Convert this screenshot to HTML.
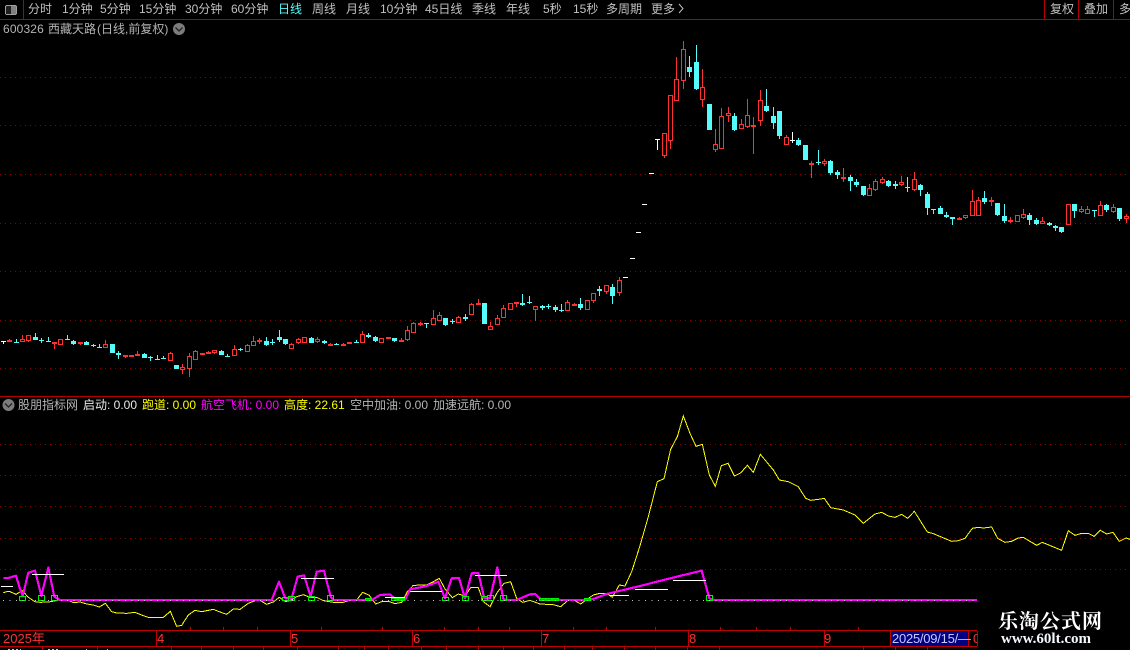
<!DOCTYPE html>
<html><head><meta charset="utf-8"><title>600326</title>
<style>
html,body{margin:0;padding:0;background:#000;width:1130px;height:650px;overflow:hidden}
#w{position:relative;width:1130px;height:650px;overflow:hidden;background:#000}
svg{position:absolute;left:0;top:0}
.t{position:absolute;font:12px/14px "Liberation Sans","WenQuanYi Zen Hei","Noto Sans CJK SC",sans-serif;white-space:nowrap;color:#c0c0c0}
.b{top:2px}
.h{top:22px;color:#b4b4b4}
.i{top:398px}
.a{top:631px;color:#ff3232;font-size:13px;line-height:15px}
</style></head><body><div id="w">
<svg width="1130" height="650" viewBox="0 0 1130 650" fill="none" shape-rendering="crispEdges">
<!-- grid -->
<path d="M0 77.500H1130M0 125.500H1130M0 174.500H1130M0 223.500H1130M0 271.500H1130M0 320.500H1130M0 368.500H1130M0 444.500H1130M0 475.500H1130M0 506.500H1130M0 538.500H1130M0 569.500H1130" stroke="#8c0000" stroke-dasharray="1 4"/>
<!-- frame -->
<path d="M0 19.500H1130M23.500 0V19M1044.500 0V19M1078.500 0V19M1113.500 0V19M0 396.500H1130" stroke="#b00000"/>
<path d="M0 630.500H977M0 646.500H977M156.500 631V646M290.500 631V646M412.500 631V646M541.500 631V646M688.500 631V646M824.500 631V646M890.500 631V646M968.500 631V646M977.500 631V646" stroke="#c00000"/>
<path d="M190.500 627V630M223.500 627V630M257.500 627V630M321.500 627V630M382.500 627V630M444.500 627V630M478.500 627V630M509.500 627V630M573.500 627V630M606.500 627V630M655.500 627V630M720.500 627V630M756.500 627V630M790.500 627V630M858.500 627V630" stroke="#c00000"/>
<path d="M42.500 647V650M97.500 647V650M171.500 647V650M201.500 647V650M233.500 647V650M263.500 647V650M297.500 647V650M338.500 647V650M364.500 647V650M388.500 647V650M421.500 647V650M446.500 647V650M478.500 647V650M503.500 647V650M533.500 647V650M564.500 647V650M592.500 647V650M624.500 647V650M655.500 647V650M687.500 647V650M719.500 647V650M863.500 647V650M895.500 647V650M927.500 647V650" stroke="#c00000"/>
<path d="M8 649.500h13M107 649.500h1" stroke="#c0c0c0" stroke-dasharray="2 2"/>
<path d="M48 649.500h10M86 649.500h1" stroke="#e0e000" stroke-dasharray="2 2"/>
<rect x="891" y="631" width="77" height="15" fill="#000080"/>
<!-- toolbar icon -->
<rect x="5.500" y="5.500" width="11" height="9" rx="1.500" stroke="#a0a0a0" fill="#202020"/>
<rect x="11" y="6" width="5" height="8" fill="#808080"/>
<!-- chevrons -->
<g shape-rendering="auto">
<circle cx="179" cy="29" r="6" fill="#7c7c7c"/><path d="M175.500 27.500l3.500 3.500 3.500-3.500" stroke="#222" stroke-width="1.300"/>
<circle cx="8.500" cy="405" r="6" fill="#7c7c7c"/><path d="M5 403.500l3.500 3.500 3.500-3.500" stroke="#222" stroke-width="1.300"/>
</g>
<path d="M679 4l4 4.500-4 4.500" stroke="#c0c0c0" shape-rendering="auto"/>
<!-- red wicks -->
<path stroke="#ff3232" d="M9.500 339V342M22.500 335V342M28.500 335V342M54.500 342V349M60.500 339V345M80.500 342V345M105.500 340V348M125.500 355V358M131.500 355V356M137.500 351V355M170.500 352V361M182.500 364V374M189.500 353V377M195.500 350V360M202.500 353V355M208.500 351V354M214.500 350V354M234.500 345V356M247.500 344V352M253.500 336V346M259.500 338V344M291.500 343V349M298.500 338V344M304.500 337V343M317.500 337V343M330.500 343V346M343.500 343V346M349.500 342V344M362.500 331V343M381.500 338V343M388.500 337V339M401.500 338V342M407.500 326V341M413.500 322V333M420.500 322V326M433.500 310V325M439.500 312V321M458.500 316V323M471.500 303V315M478.500 299V305M490.500 322V330M497.500 315V325M503.500 305V318M510.500 303V310M516.500 302V307M535.500 306V321M567.500 300V311M574.500 303V305M587.500 300V310M593.500 293V303M606.500 285V294M619.500 277V296M664.500 133V158M670.500 95V149M676.500 57V101M683.500 41V89M702.500 69V107M715.500 129V152M721.500 108V149M728.500 107V122M741.500 119V129M747.500 99V128M753.500 117V154M760.500 90V126M786.500 135V145M811.500 161V178M824.500 159V166M843.500 168V182M869.500 184V196M875.500 179V191M882.500 177V184M901.500 176V186M914.500 172V191M959.500 217V220M965.500 215V219M972.500 190V216M978.500 197V216M991.500 197V206M1010.500 217V223M1017.500 215V222M1023.500 209V219M1042.500 217V224M1068.500 204V225M1081.500 206V213M1087.500 206V214M1100.500 201V216M1113.500 204V213M1126.500 214V223"/>
<!-- red bodies -->
<path stroke="#ff3232" fill="#000" d="M7.500 340.500h4v1h-4zM20.500 339.500h4v2h-4zM26.500 335.500h4v5h-4zM52.500 342.500h4v1h-4zM58.500 339.500h4v5h-4zM78.500 342.500h4v1h-4zM103.500 344.500h4v3h-4zM123.500 355.500h4v1h-4zM129.500 355.500h4v1h-4zM135.500 354.500h4v1h-4zM168.500 353.500h4v7h-4zM180.500 367.500h4v2h-4zM187.500 356.500h4v12h-4zM193.500 351.500h4v8h-4zM200.500 353.500h4v1h-4zM206.500 352.500h4v1h-4zM212.500 350.500h4v2h-4zM232.500 349.500h4v6h-4zM245.500 345.500h4v6h-4zM251.500 341.500h4v4h-4zM257.500 340.500h4v1h-4zM289.500 344.500h4v4h-4zM296.500 339.500h4v3h-4zM302.500 337.500h4v5h-4zM315.500 339.500h4v2h-4zM328.500 344.500h4v1h-4zM341.500 344.500h4v1h-4zM347.500 342.500h4v1h-4zM360.500 334.500h4v8h-4zM379.500 338.500h4v4h-4zM386.500 337.500h4v1h-4zM399.500 340.500h4v1h-4zM405.500 330.500h4v9h-4zM411.500 323.500h4v9h-4zM418.500 323.500h4v1h-4zM431.500 318.500h4v6h-4zM437.500 315.500h4v5h-4zM456.500 317.500h4v5h-4zM469.500 304.500h4v10h-4zM476.500 303.500h4v1h-4zM488.500 326.500h4v3h-4zM495.500 318.500h4v6h-4zM501.500 308.500h4v9h-4zM508.500 303.500h4v6h-4zM514.500 302.500h4v1h-4zM533.500 306.500h4v3h-4zM565.500 302.500h4v8h-4zM572.500 304.500h4v1h-4zM585.500 300.500h4v9h-4zM591.500 293.500h4v7h-4zM604.500 285.500h4v6h-4zM617.500 280.500h4v12h-4zM662.500 133.500h4v22h-4zM668.500 95.500h4v45h-4zM674.500 79.500h4v21h-4zM681.500 49.500h4v31h-4zM700.500 87.500h4v12h-4zM713.500 144.500h4v5h-4zM719.500 116.500h4v32h-4zM726.500 113.500h4v2h-4zM739.500 124.500h4v4h-4zM745.500 115.500h4v11h-4zM751.500 125.500h4v1h-4zM758.500 100.500h4v20h-4zM784.500 137.500h4v7h-4zM809.500 163.500h4v1h-4zM822.500 161.500h4v2h-4zM841.500 177.500h4v1h-4zM867.500 188.500h4v7h-4zM873.500 181.500h4v8h-4zM880.500 179.500h4v3h-4zM899.500 182.500h4v2h-4zM912.500 179.500h4v10h-4zM957.500 218.500h4v1h-4zM963.500 215.500h4v2h-4zM970.500 201.500h4v14h-4zM976.500 200.500h4v15h-4zM989.500 200.500h4v1h-4zM1008.500 220.500h4v1h-4zM1015.500 215.500h4v6h-4zM1021.500 214.500h4v3h-4zM1040.500 221.500h4v2h-4zM1066.500 204.500h4v20h-4zM1079.500 209.500h4v2h-4zM1085.500 209.500h4v4h-4zM1098.500 205.500h4v10h-4zM1111.500 207.500h4v4h-4zM1124.500 216.500h4v2h-4z"/>
<!-- cyan wicks -->
<path stroke="#54fcfc" d="M16.500 339V343M35.500 333V340M41.500 338V343M48.500 337V342M67.500 335V340M73.500 340V345M86.500 341V345M93.500 344V347M99.500 344V348M118.500 351V359M144.500 353V358M150.500 356V361M157.500 355V360M163.500 356V359M221.500 350V355M227.500 354V357M240.500 348V351M266.500 337V346M272.500 339V345M279.500 330V342M285.500 339V345M311.500 337V343M324.500 340V344M336.500 343V345M356.500 340V343M368.500 333V338M375.500 336V342M394.500 338V342M426.500 323V328M445.500 318V326M452.500 319V324M465.500 314V321M522.500 294V306M529.500 296V304M542.500 305V310M548.500 304V309M555.500 305V312M561.500 304V312M580.500 298V310M599.500 286V296M612.500 284V304M689.500 56V77M696.500 45V90M734.500 113V131M766.500 89V112M773.500 107V129M779.500 111V139M798.500 138V146M818.500 150V165M830.500 160V175M837.500 170V179M850.500 175V191M856.500 179V187M863.500 186V196M888.500 180V187M895.500 181V189M907.500 177V192M920.500 184V196M927.500 192V215M933.500 209V214M940.500 206V214M946.500 212V218M952.500 217V225M984.500 191V204M997.500 203V216M1004.500 204V223M1029.500 213V225M1036.500 218V225M1049.500 222V226M1055.500 225V231M1061.500 227V233M1074.500 204V218M1094.500 210V217M1106.500 204V212M1119.500 208V221"/>
<!-- cyan bodies -->
<path fill="#54fcfc" d="M14 342h5v1h-5zM33 337h5v3h-5zM39 340h5v1h-5zM46 341h5v1h-5zM65 339h5v1h-5zM71 341h5v3h-5zM84 342h5v3h-5zM91 345h5v1h-5zM97 347h5v1h-5zM110 344h5v9h-5zM116 353h5v2h-5zM142 354h5v4h-5zM148 357h5v1h-5zM155 359h5v1h-5zM161 358h5v1h-5zM174 365h5v4h-5zM219 351h5v4h-5zM225 356h5v1h-5zM238 349h5v1h-5zM264 341h5v4h-5zM270 342h5v1h-5zM277 337h5v3h-5zM283 339h5v5h-5zM309 338h5v5h-5zM322 341h5v2h-5zM334 344h5v1h-5zM354 342h5v1h-5zM366 335h5v2h-5zM373 337h5v4h-5zM392 338h5v3h-5zM424 323h5v1h-5zM443 318h5v7h-5zM450 321h5v1h-5zM463 317h5v2h-5zM482 303h5v21h-5zM520 303h5v2h-5zM527 302h5v1h-5zM540 306h5v2h-5zM546 306h5v1h-5zM553 307h5v3h-5zM559 310h5v1h-5zM578 304h5v4h-5zM597 289h5v2h-5zM610 287h5v9h-5zM687 67h5v5h-5zM694 62h5v27h-5zM707 104h5v26h-5zM732 116h5v14h-5zM764 106h5v5h-5zM771 116h5v7h-5zM777 111h5v25h-5zM796 140h5v5h-5zM803 145h5v15h-5zM816 162h5v1h-5zM828 161h5v12h-5zM835 172h5v3h-5zM848 177h5v4h-5zM854 182h5v3h-5zM861 186h5v9h-5zM886 181h5v5h-5zM893 184h5v2h-5zM905 187h5v1h-5zM918 185h5v5h-5zM925 194h5v14h-5zM931 209h5v1h-5zM938 208h5v6h-5zM944 215h5v2h-5zM950 217h5v2h-5zM982 198h5v4h-5zM995 203h5v12h-5zM1002 216h5v5h-5zM1027 215h5v5h-5zM1034 220h5v4h-5zM1047 223h5v2h-5zM1053 226h5v2h-5zM1059 227h5v5h-5zM1072 204h5v7h-5zM1092 210h5v1h-5zM1104 205h5v5h-5zM1117 208h5v11h-5z"/>
<!-- white -->
<path stroke="#fff" d="M1 341.500h5M3.500 342V344M623 277.500h5M630 258.500h5M636 232.500h5M642 204.500h5M649 173.500h5M655 139.500h5M657.500 140V150M790 140.500h5M792.500 132V143"/>
<!-- indicator: yellow, in zoom coordinates -->
<g stroke="#ffff00" stroke-width="3">
<path transform="translate(0 550) scale(.33333)" d="M10 128L20 125L30 125L48 133L67 122L85 142L105 155L120 157L145 156L163 153L181 148L200 148L220 158L240 156L260 162L280 165L298 171L316 160L335 185L350 189L380 190L405 187L430 197L445 202L490 202L511 184L530 229L545 226L565 195L585 181L605 185L640 178L660 186L680 193L700 177L720 178L745 160L775 148L800 163L820 156L838 142L857 155L875 150L890 140L910 134L930 142L950 142L970 152L1000 157L1030 157L1050 150"/>
<path transform="translate(350 550) scale(.33333)" d="M0 151L20 150L38 127L58 136L77 162L95 155L115 154L135 161L155 157L172 125L190 106L230 105L250 95L268 85L285 117L307 143L325 132L345 138L362 113L385 113L400 155L420 170L440 130L462 100L482 95L500 145L518 157L540 151L570 162L610 164L632 170L655 150L675 152L692 162L712 147L730 135L750 130L770 130L787 142L808 105L825 108L845 65L866 0L870 -13"/>
<path transform="translate(640 400) scale(.33333)" d="M0 437L25 350L52 245L72 236L92 148L112 110L130 48L150 100L168 139L187 133L208 225L226 259L244 197L264 190L283 228L302 219L322 196L340 217L361 163L400 210L418 240L445 245L475 260L497 295L512 301L535 298L553 295L572 323L610 330L645 345L670 370L705 342L725 337L745 348L765 352L785 343L803 355L823 334L862 396L880 401L935 424L955 422L975 415L997 385L1015 382L1030 384L1055 381L1073 415L1095 427L1115 424L1135 414L1150 412L1190 436L1207 427L1265 451L1285 392L1305 406L1325 400L1345 400L1362 409L1381 391L1400 402L1419 397L1438 424L1458 414L1470 418"/>
</g>
<!-- magenta -->
<g stroke="#ff00ff" stroke-width="6.500" stroke-linejoin="round">
<path transform="translate(0 550) scale(.33333)" d="M10 84L25 84L48 77L58 110L68 138L85 68L105 62L124 138L145 53L163 140L180 150L815 150L837 95L856 145L875 145L893 80L912 76L932 140L950 65L972 62L992 140L1000 150L1050 150"/>
<path transform="translate(350 550) scale(.33333)" d="M0 150L65 150L90 135L120 133L140 150L165 150L180 118L230 108L265 95L285 145L305 85L327 84L345 145L365 70L385 69L403 145L420 145L442 52L460 147L470 150L500 150L540 133L555 132L575 150L715 150L735 145L770 132L870 108L960 85L1055 62L1078 145L1090 150L1881 150"/>
</g>
<!-- white level lines -->
<path stroke="#fff" d="M1 586.500h12M32 574.500h32M301 578.500h33M385 597.500h20M410 591.500h32M475 575.500h32M610 595.500h19M635 589.500h33M673 580.500h33"/>
<!-- green boxes -->
<path stroke="#00f000" d="M19.500 596.500h6v4h-6zM38.500 595.500h6v5h-6zM51.500 595.500h6v5h-6zM282.500 597.500h6v3h-6zM288.500 596.500h6v4h-6zM308.500 596.500h6v4h-6zM327.500 595.500h6v5h-6zM365.500 598.500h6v2h-6zM391.500 598.500h6v2h-6zM398.500 598.500h6v2h-6zM442.500 597.500h6v3h-6zM462.500 596.500h6v4h-6zM481.500 596.500h6v4h-6zM487.500 595.500h6v5h-6zM500.500 595.500h6v5h-6zM539.500 598.500h6v2h-6zM545.500 598.500h6v2h-6zM552.500 598.500h6v2h-6zM584.500 598.500h6v2h-6zM706.500 595.500h6v5h-6z"/>
<path d="M3 600.500H977" stroke="#c8c8c8" stroke-dasharray="1 5.420"/>
<!-- watermark backing -->
<rect x="978" y="602" width="152" height="48" fill="#000"/>
</svg>
<span class="t b" style="left:28px">分时</span>
<span class="t b" style="left:62px">1分钟</span>
<span class="t b" style="left:100px">5分钟</span>
<span class="t b" style="left:139px">15分钟</span>
<span class="t b" style="left:185px">30分钟</span>
<span class="t b" style="left:231px">60分钟</span>
<span class="t b" style="left:278px;color:#54fcfc">日线</span>
<span class="t b" style="left:312px">周线</span>
<span class="t b" style="left:346px">月线</span>
<span class="t b" style="left:380px">10分钟</span>
<span class="t b" style="left:425px">45日线</span>
<span class="t b" style="left:472px">季线</span>
<span class="t b" style="left:506px">年线</span>
<span class="t b" style="left:543px">5秒</span>
<span class="t b" style="left:573px">15秒</span>
<span class="t b" style="left:606px">多周期</span>
<span class="t b" style="left:651px">更多</span>
<span class="t b" style="left:1050px">复权</span>
<span class="t b" style="left:1084px">叠加</span>
<span class="t b" style="left:1119px">多</span>
<span class="t h" style="left:3px;letter-spacing:.15px">600326</span>
<span class="t h" style="left:48px">西藏天路</span>
<span class="t h" style="left:97px">(日线,前复权)</span>
<span class="t i" style="left:18px;color:#b4b4b4">股朋指标网</span>
<span class="t i" style="left:83px;color:#e8e8e8">启动: 0.00</span>
<span class="t i" style="left:142px;color:#ffff00">跑道: 0.00</span>
<span class="t i" style="left:201px;color:#ff00ff">航空飞机: 0.00</span>
<span class="t i" style="left:284px;color:#ffff00">高度: 22.61</span>
<span class="t i" style="left:350px;color:#b4b4b4">空中加油: 0.00</span>
<span class="t i" style="left:433px;color:#b4b4b4">加速远航: 0.00</span>
<span class="t a" style="left:3px">2025年</span>
<span class="t a" style="left:157px">4</span>
<span class="t a" style="left:291px">5</span>
<span class="t a" style="left:413px">6</span>
<span class="t a" style="left:542px">7</span>
<span class="t a" style="left:689px">8</span>
<span class="t a" style="left:824px">9</span>
<span class="t a" style="left:892px;color:#c8c8ff;letter-spacing:-.25px">2025/09/15/—</span>
<span class="t a" style="left:973px;width:4px;overflow:hidden">0</span>
<span class="t" style="left:998px;top:608px;font:bold 20px/24px 'Noto Serif CJK SC','Liberation Serif',serif;color:#fff;letter-spacing:1px">乐淘公式网</span>
<span class="t" style="left:1001px;top:631px;font:bold 15px/17px 'Liberation Serif',serif;color:#f4f8ff">www.60lt.com</span>
</div></body></html>
